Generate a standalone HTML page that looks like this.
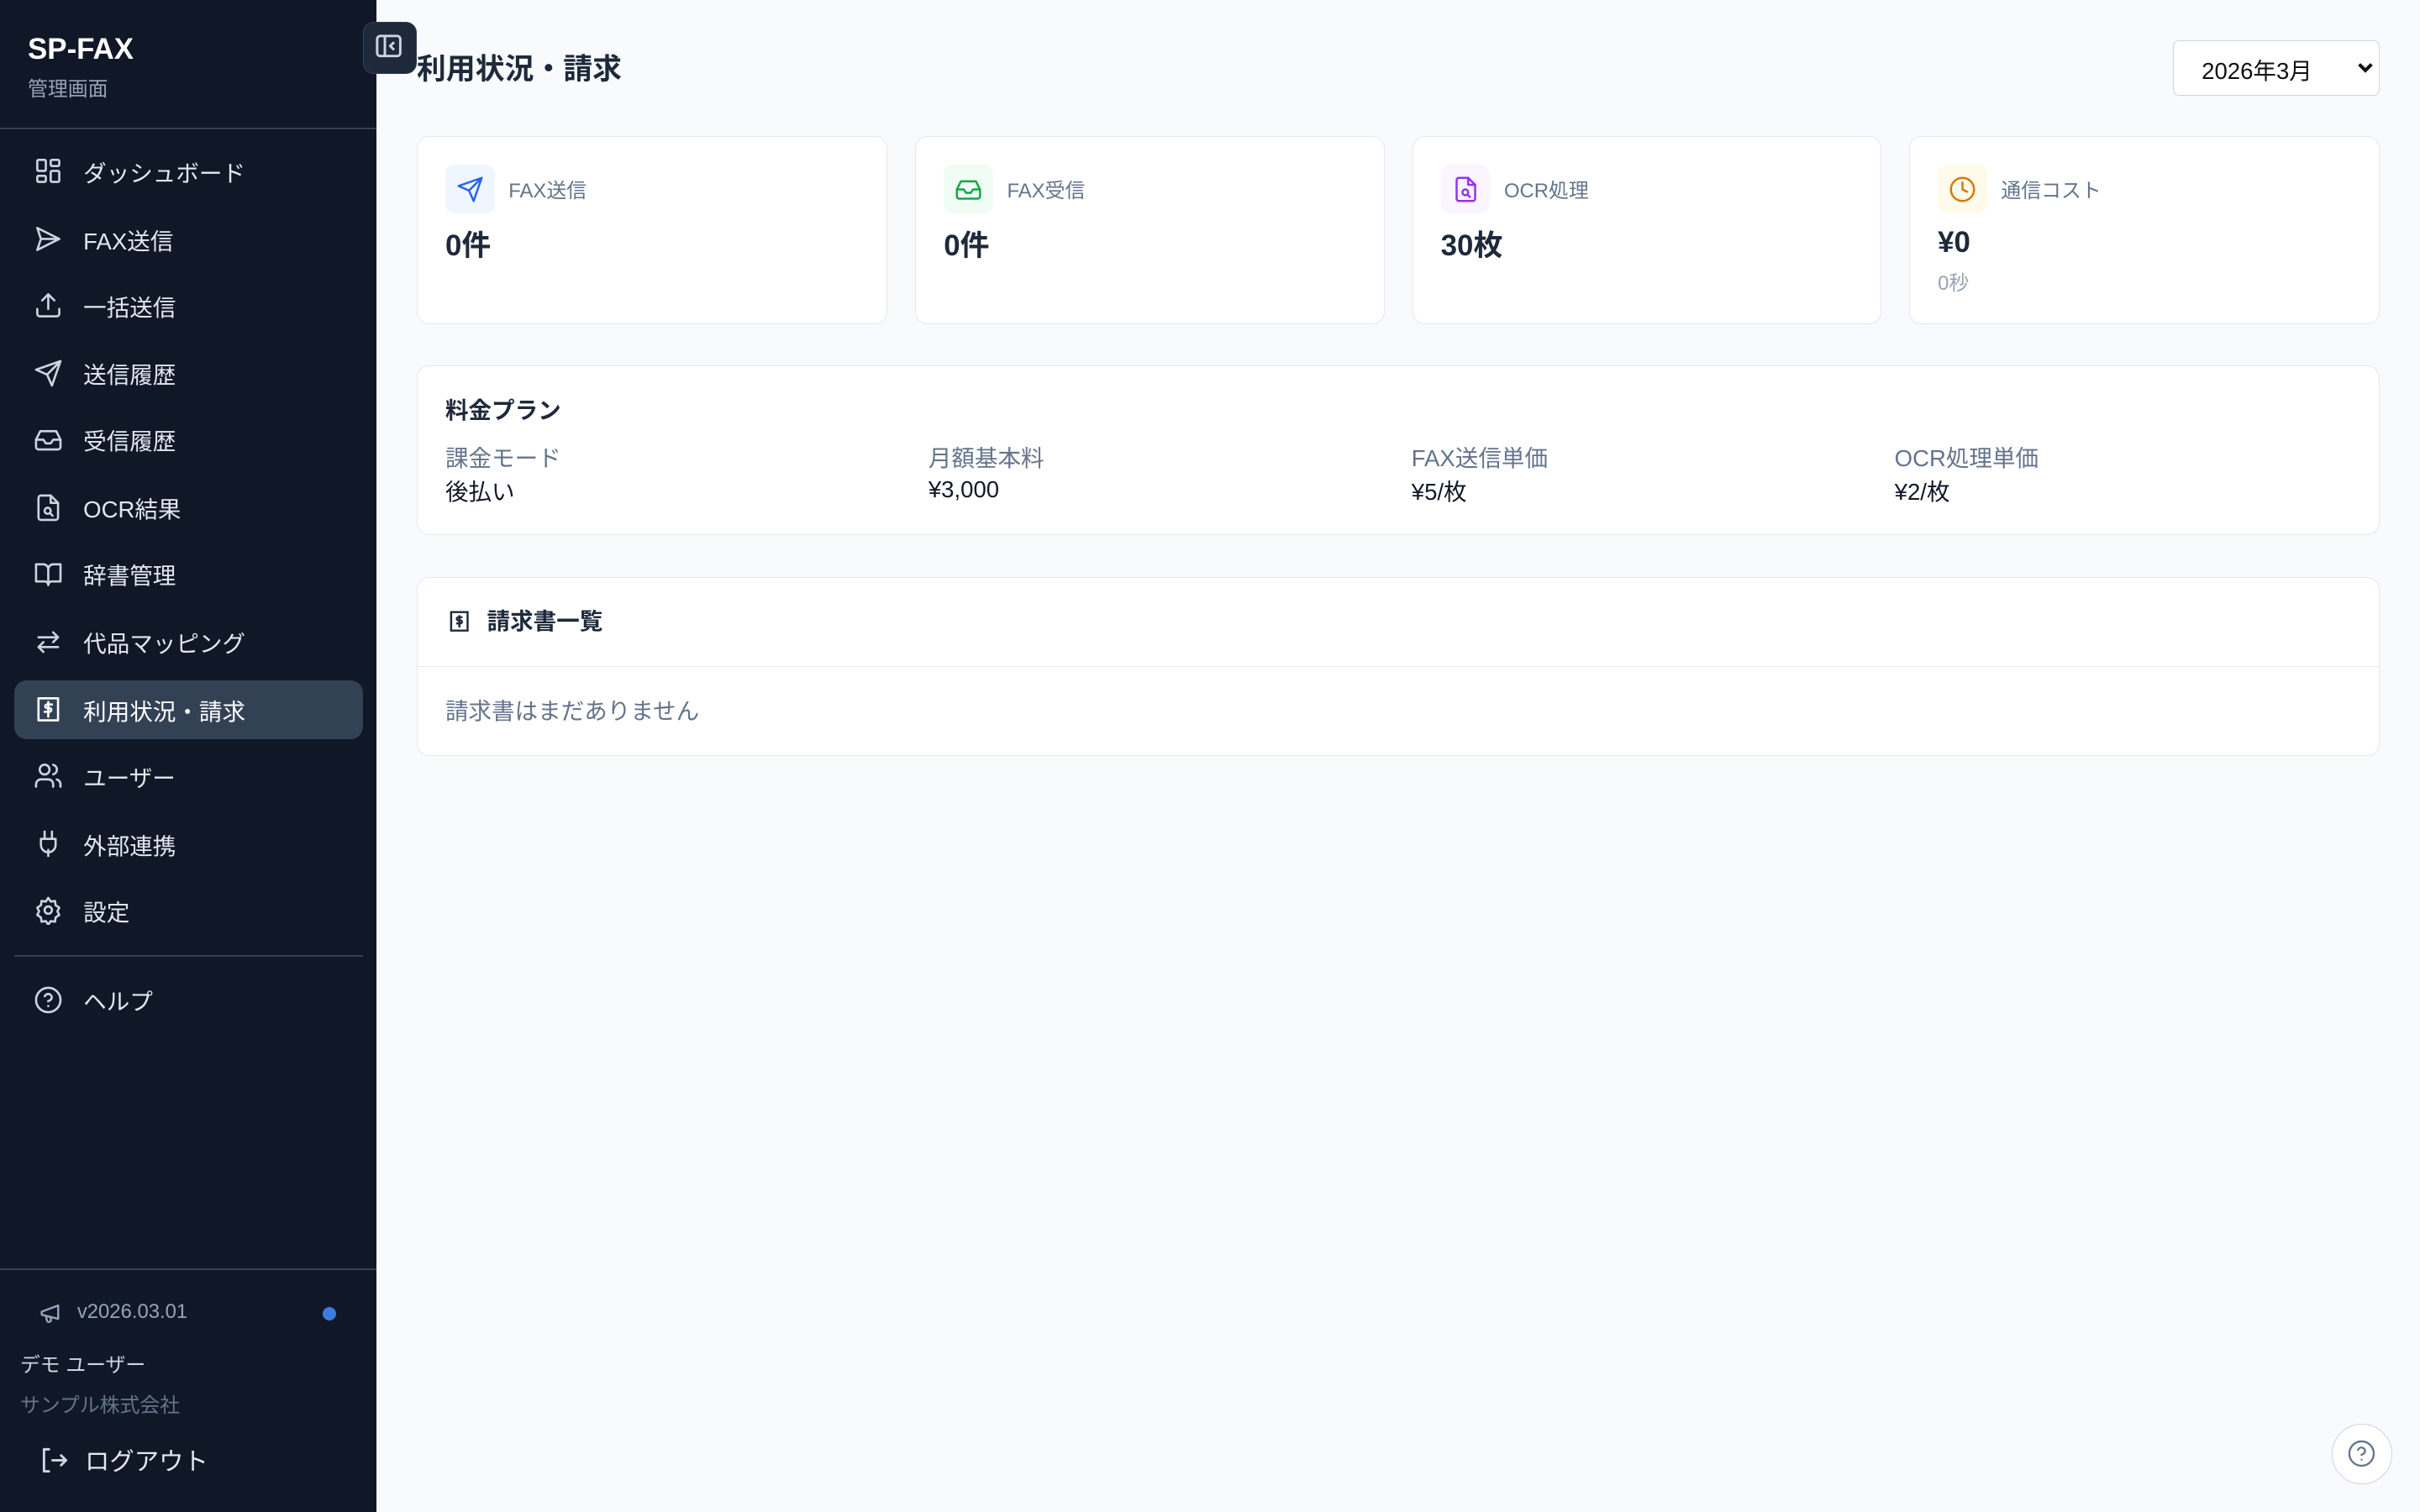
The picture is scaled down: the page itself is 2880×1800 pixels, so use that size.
<!DOCTYPE html>
<html><head><meta charset="utf-8">
<style>
*{box-sizing:border-box;margin:0;padding:0}
html,body{width:1568px;height:980px;overflow:hidden}
body{zoom:1.836735;background:#f8fafc;font-family:"Liberation Sans","Noto Sans CJK JP",sans-serif;color:#1e293b;position:relative;width:1568px;height:980px}
.abs{position:absolute}
.side{left:0;top:0;width:244px;height:980px;background:#101828}
.nav{position:absolute;left:9px;width:226px;height:38px;border-radius:8px;color:#e2e8f0;font-size:15px;display:flex;align-items:center}
.nav svg{position:absolute;left:13px;width:19px;height:19px;fill:none;stroke:#cbd5e1;stroke-width:1.8;stroke-linecap:round;stroke-linejoin:round}
.nav span{position:absolute;left:45px}
.act{background:#334155;color:#fff}
.card{position:absolute;background:#fff;border:1px solid #e2e8f0;border-radius:8px}
.ib{position:absolute;left:18px;top:18px;width:32px;height:32px;border-radius:6px}
.ib svg{position:absolute;left:7px;top:7px;width:18px;height:18px;fill:none;stroke-width:1.8;stroke-linecap:round;stroke-linejoin:round}
.lab{position:absolute;left:59px;top:24px;font-size:13px;color:#64748b}
.val{position:absolute;left:18px;top:56px;font-size:19px;font-weight:bold;color:#1e293b}
.pl{position:absolute;top:47px;font-size:15px;color:#64748b}
.pv{position:absolute;top:69px;font-size:15px;color:#111827}
</style></head><body>
<div class="abs side"></div>
<div class="abs" style="left:18px;top:21px;color:#fff;font-weight:bold;font-size:19px">SP-FAX</div>
<div class="abs" style="left:18px;top:47px;color:#94a3b8;font-size:13px">管理画面</div>
<div class="abs" style="left:0;top:83px;width:244px;height:1px;background:#334155"></div>
<div class="abs" style="left:235px;top:14px;width:35px;height:34px;background:#1e293b;border:1px solid #334155;border-radius:7px"><svg style="position:absolute;left:8px;top:8px" width="17" height="16" viewBox="0 0 17 16" fill="none" stroke="#cbd5e1" stroke-width="1.6"><rect x="1" y="1" width="15" height="13" rx="2"/><path d="M6 1v13M12 5l-2.5 2.5L12 10"/></svg></div>

<div class="nav" style="top:92px"><svg viewBox="0 0 24 24"><rect x="3" y="3" width="7" height="9" rx="1"/><rect x="14" y="3" width="7" height="5" rx="1"/><rect x="14" y="12" width="7" height="9" rx="1"/><rect x="3" y="16" width="7" height="5" rx="1"/></svg><span>ダッシュボード</span></div>
<div class="nav" style="top:136px"><svg viewBox="0 0 24 24"><path d="M3 3l18 9-18 9 3-9-3-9zM6 12h15"/></svg><span>FAX送信</span></div>
<div class="nav" style="top:179px"><svg viewBox="0 0 24 24"><path d="M21 15v4a2 2 0 0 1-2 2H5a2 2 0 0 1-2-2v-4M17 8l-5-5-5 5M12 3v12"/></svg><span>一括送信</span></div>
<div class="nav" style="top:223px"><svg viewBox="0 0 24 24"><path d="M22 2L11 13M22 2l-7 20-4-9-9-4 20-7z"/></svg><span>送信履歴</span></div>
<div class="nav" style="top:266px"><svg viewBox="0 0 24 24"><path d="M22 12h-6l-2 3h-4l-2-3H2"/><path d="M5.5 5h13L22 12v6a2 2 0 0 1-2 2H4a2 2 0 0 1-2-2v-6z"/></svg><span>受信履歴</span></div>
<div class="nav" style="top:310px"><svg viewBox="0 0 24 24"><path d="M14 2H6a2 2 0 0 0-2 2v16a2 2 0 0 0 2 2h12a2 2 0 0 0 2-2V8z"/><path d="M14 2v6h6"/><circle cx="11.5" cy="14.5" r="2.5"/><path d="M13.5 16.5l2 2"/></svg><span>OCR結果</span></div>
<div class="nav" style="top:353px"><svg viewBox="0 0 24 24"><path d="M2 4h6a4 4 0 0 1 4 4v13a3 3 0 0 0-3-3H2zM22 4h-6a4 4 0 0 0-4 4v13a3 3 0 0 1 3-3h7z"/></svg><span>辞書管理</span></div>
<div class="nav" style="top:397px"><svg viewBox="0 0 24 24"><path d="M4 8h16M16 4l4 4-4 4M20 16H4M8 12l-4 4 4 4"/></svg><span>代品マッピング</span></div>
<div class="nav act" style="top:441px"><svg viewBox="0 0 24 24" style="stroke:#fff"><path d="M4 3h16v18H4zM15 8h-4a1.5 1.5 0 0 0 0 3h2a1.5 1.5 0 0 1 0 3H9M12 6v12"/></svg><span>利用状況・請求</span></div>
<div class="nav" style="top:484px"><svg viewBox="0 0 24 24"><path d="M16 21v-2a4 4 0 0 0-4-4H6a4 4 0 0 0-4 4v2"/><circle cx="9" cy="7" r="4"/><path d="M22 21v-2a4 4 0 0 0-3-3.9M16 3.1a4 4 0 0 1 0 7.8"/></svg><span>ユーザー</span></div>
<div class="nav" style="top:528px"><svg viewBox="0 0 24 24"><path d="M12 22v-5M9 8V2M15 8V2M18 8v5a6 6 0 0 1-12 0V8z"/></svg><span>外部連携</span></div>
<div class="nav" style="top:571px"><svg viewBox="0 0 24 24"><circle cx="12" cy="12" r="3"/><path d="M12 2l2 3 3.5-.5.5 3.5 3 2-1.5 3 1.5 3-3 2-.5 3.5-3.5-.5-2 3-2-3-3.5.5-.5-3.5-3-2 1.5-3L3 10l3-2 .5-3.5L10 5z"/></svg><span>設定</span></div>
<div class="abs" style="left:9px;top:619px;width:226px;height:1px;background:#334155"></div>
<div class="nav" style="top:629px"><svg viewBox="0 0 24 24"><circle cx="12" cy="12" r="10"/><path d="M9.1 9a3 3 0 0 1 5.8 1c0 2-3 3-3 3M12 17h.01"/></svg><span>ヘルプ</span></div>
<div class="abs" style="left:0;top:822px;width:244px;height:1px;background:#334155"></div>
<svg class="abs" style="left:25px;top:843px" width="16" height="16" viewBox="0 0 24 24" fill="none" stroke="#94a3b8" stroke-width="2" stroke-linejoin="round"><path d="M3 11l16-6v13L3 14zM7 14.5l1 5a2 2 0 0 0 4-1l-1-3"/></svg>
<div class="abs" style="left:50px;top:843px;font-size:13px;color:#94a3b8">v2026.03.01</div>
<div class="abs" style="left:209px;top:847px;width:9px;height:9px;border-radius:50%;background:#3b7ddd"></div>
<div class="abs" style="left:13px;top:874px;font-size:13px;color:#cbd5e1">デモ ユーザー</div>
<div class="abs" style="left:13px;top:900px;font-size:13px;color:#64748b">サンプル株式会社</div>
<svg class="abs" style="left:26px;top:937px" width="19" height="19" viewBox="0 0 24 24" fill="none" stroke="#cbd5e1" stroke-width="2" stroke-linecap="round" stroke-linejoin="round"><path d="M7 3H3v18h4M10 12h11M17 8l4 4-4 4"/></svg>
<div class="abs" style="left:55px;top:935px;font-size:16px;color:#e2e8f0">ログアウト</div>

<div class="abs" style="left:270px;top:30px;font-size:19px;font-weight:bold;color:#1e293b">利用状況・請求</div>
<div class="abs" style="left:1408px;top:26px;width:134px;height:36px;border:1px solid #cbd5e1;border-radius:4px;background:#fff;font-size:15px;color:#111"><span style="position:absolute;left:18px;top:7px">2026年3月</span><svg style="position:absolute;left:118px;top:12px" width="12" height="10" viewBox="0 0 12 10" fill="none" stroke="#111" stroke-width="2.2"><path d="M2 3l4 4 4-4"/></svg></div>

<div class="card" style="left:270px;top:88px;width:305px;height:122px"><div class="ib" style="background:#eff6ff"><svg viewBox="0 0 24 24" stroke="#2563eb"><path d="M22 2L11 13M22 2l-7 20-4-9-9-4 20-7z"/></svg></div><div class="lab">FAX送信</div><div class="val">0件</div></div>
<div class="card" style="left:593px;top:88px;width:304px;height:122px"><div class="ib" style="background:#f0fdf4"><svg viewBox="0 0 24 24" stroke="#16a34a"><path d="M22 12h-6l-2 3h-4l-2-3H2"/><path d="M5.5 5h13L22 12v6a2 2 0 0 1-2 2H4a2 2 0 0 1-2-2v-6z"/></svg></div><div class="lab">FAX受信</div><div class="val">0件</div></div>
<div class="card" style="left:915px;top:88px;width:304px;height:122px"><div class="ib" style="background:#faf5ff"><svg viewBox="0 0 24 24" stroke="#9333ea"><path d="M14 2H6a2 2 0 0 0-2 2v16a2 2 0 0 0 2 2h12a2 2 0 0 0 2-2V8z"/><path d="M14 2v6h6"/><circle cx="11.5" cy="14.5" r="2.5"/><path d="M13.5 16.5l2 2"/></svg></div><div class="lab">OCR処理</div><div class="val">30枚</div></div>
<div class="card" style="left:1237px;top:88px;width:305px;height:122px"><div class="ib" style="background:#fffbeb"><svg viewBox="0 0 24 24" stroke="#d97706"><circle cx="12" cy="12" r="10"/><path d="M12 6v6l4 2"/></svg></div><div class="lab">通信コスト</div><div class="val" style="top:58px">¥0</div><div style="position:absolute;left:18px;top:84px;font-size:13px;color:#94a3b8">0秒</div></div>

<div class="card" style="left:270px;top:237px;width:1272px;height:110px">
<div style="position:absolute;left:18px;top:16px;font-size:15px;font-weight:bold">料金プラン</div>
<div class="pl" style="left:18px">課金モード</div><div class="pv" style="left:18px">後払い</div>
<div class="pl" style="left:331px">月額基本料</div><div class="pv" style="left:331px;top:71px">¥3,000</div>
<div class="pl" style="left:644px">FAX送信単価</div><div class="pv" style="left:644px">¥5/枚</div>
<div class="pl" style="left:957px">OCR処理単価</div><div class="pv" style="left:957px">¥2/枚</div>
</div>

<div class="card" style="left:270px;top:374px;width:1272px;height:116px">
<svg style="position:absolute;left:19px;top:20px" width="16" height="16" viewBox="0 0 24 24" fill="none" stroke="#1e293b" stroke-width="2"><path d="M4 3h16v18H4zM15 8h-4a1.5 1.5 0 0 0 0 3h2a1.5 1.5 0 0 1 0 3H9M12 6v12"/></svg>
<div style="position:absolute;left:45px;top:16px;font-size:15px;font-weight:bold">請求書一覧</div>
<div style="position:absolute;left:0;top:57px;width:100%;height:1px;background:#e2e8f0"></div>
<div style="position:absolute;left:18px;top:74px;font-size:15px;color:#64748b">請求書はまだありません</div>
</div>

<div class="abs" style="left:1511px;top:923px;width:39px;height:39px;border-radius:50%;background:#fff;border:1px solid #cbd5e1"><svg style="position:absolute;left:9px;top:9px" width="19" height="19" viewBox="0 0 24 24" fill="none" stroke="#64748b" stroke-width="1.6" stroke-linecap="round"><circle cx="12" cy="12" r="10"/><path d="M9.1 9a3 3 0 0 1 5.8 1c0 2-3 3-3 3M12 17h.01"/></svg></div>
</body></html>
